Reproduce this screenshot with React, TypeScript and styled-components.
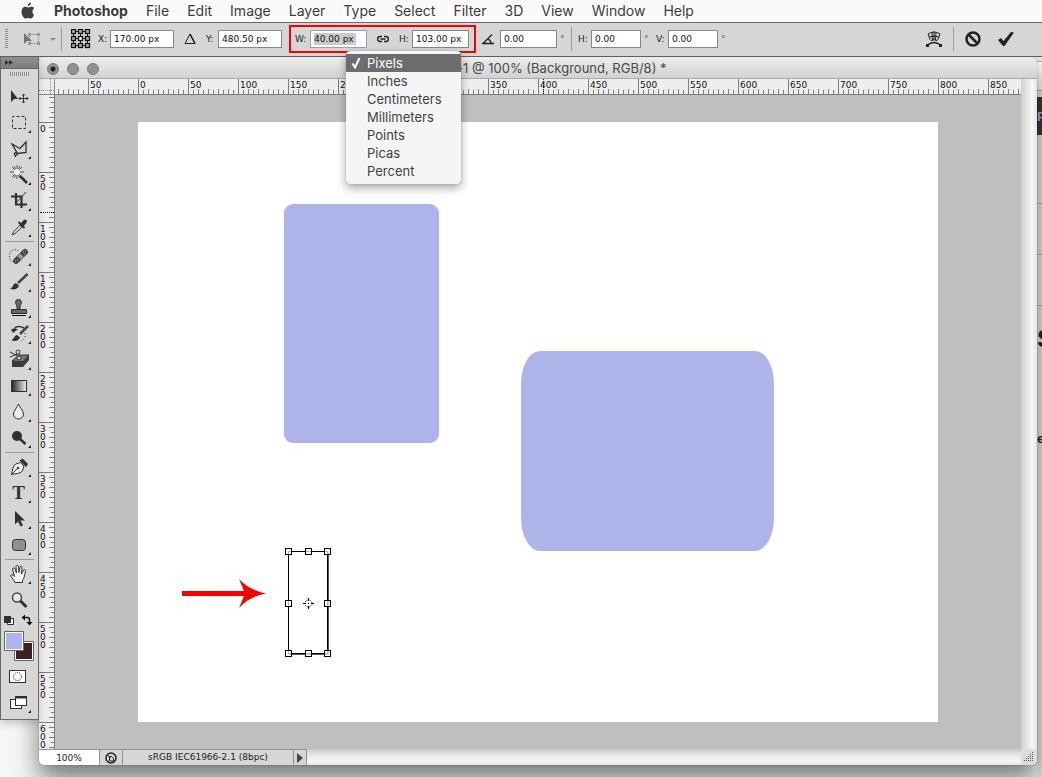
import React from "react";
import styled, { createGlobalStyle, css } from "styled-components";

const Global = createGlobalStyle`
  * { box-sizing: border-box; }
  body { margin: 0; background: #f6f6f6; font-family: Inter, "Liberation Sans", sans-serif; color: #222; }
  button { appearance: none; border: 0; padding: 0; margin: 0; background: none; font: inherit; color: inherit; display: block; }
  svg { display: block; flex: none; }
  ul { list-style: none; margin: 0; padding: 0; }
`;

const PERIWINKLE = "#aeb4e9";
const smallText = `"DejaVu Sans", "Liberation Sans", sans-serif`;

const Screen = styled.div`
  min-height: 100vh;
  display: flex;
  flex-direction: column;
  overflow: hidden;
`;

/* ---------- menu bar ---------- */

const MenuBar = styled.nav`
  height: 22px;
  display: flex;
  align-items: center;
  gap: 18px;
  padding-left: 20px;
  background: #fafafa;
  color: #3c3c3c;
  font-size: 14px;
  line-height: 22px;
`;

const MenuTitle = styled.button<{ $strong?: boolean }>`
  font-weight: ${(p) => (p.$strong ? 700 : 400)};
  white-space: nowrap;
`;

/* ---------- options bar ---------- */

const OptionsBar = styled.header`
  position: relative;
  z-index: 3;
  height: 35px;
  display: flex;
  align-items: center;
  padding: 0 28px 1px 5px;
  background: #d6d6d6;
  border-top: 1px solid #6a6a6a;
  border-bottom: 1px solid #5e5e5e;
  font-family: ${smallText};
  font-size: 9px;
`;

const Slot = styled.div<{ $gap?: number }>`
  margin-left: ${(p) => p.$gap ?? 0}px;
  display: flex;
  align-items: center;
  flex: none;
`;

const Grip = styled.span<{ $row?: boolean }>`
  flex: none;
  width: ${(p) => (p.$row ? 20 : 3)}px;
  height: ${(p) => (p.$row ? 4 : 20)}px;
  background: repeating-linear-gradient(
    ${(p) => (p.$row ? "to right" : "to bottom")},
    #8b8b8b 0 1px,
    #dedede 1px 2px
  );
`;

const Rule = styled.span<{ $gap: number }>`
  flex: none;
  width: 1px;
  height: 24px;
  margin-left: ${(p) => p.$gap}px;
  background: #9c9c9c;
`;

const Spring = styled.span`
  flex: 1;
`;

const Field = styled.label<{ $gap: number }>`
  margin-left: ${(p) => p.$gap}px;
  display: flex;
  align-items: center;
  flex: none;
  color: #1c1c1c;
`;

const FieldName = styled.span<{ $w: number }>`
  width: ${(p) => p.$w}px;
  white-space: nowrap;
`;

const NumberBox = styled.input<{ $w: number; $active?: boolean }>`
  width: ${(p) => p.$w}px;
  height: 18px;
  padding: 0 0 0 3px;
  border: 1px solid #868686;
  border-radius: 0;
  outline: none;
  background: #fff;
  color: #111;
  font: 9px/14px ${smallText};
  ${(p) =>
    p.$active &&
    css`
      border-color: #86a6cf;
      background: linear-gradient(#cacaca, #cacaca) 3px 2px / 42px 12px no-repeat #fff;
    `}
`;

const Degree = styled.span`
  width: 8px;
  margin-left: 3px;
  color: #4d5a66;
`;

const SizeGroup = styled.div`
  position: relative;
  display: flex;
  align-items: center;
  flex: none;
  width: 187px;
  height: 28px;
  margin-left: 7px;
  padding-left: 4px;
  border: 2px solid #f80000;
`;

const UnitMenu = styled.ul`
  position: absolute;
  z-index: 5;
  top: 24px;
  left: 55px;
  width: 115px;
  padding: 3px 0 4px;
  background: #f5f5f5;
  border-radius: 4px;
  box-shadow: 0 4px 10px rgba(0, 0, 0, 0.35), 0 0 1px rgba(0, 0, 0, 0.5);
  font-family: Inter, "Liberation Sans", sans-serif;
  font-size: 13px;
  color: #3f3f42;
`;

const UnitItem = styled.button<{ $on?: boolean }>`
  width: 100%;
  height: 18px;
  display: flex;
  align-items: center;
  line-height: 18px;
  background: ${(p) => (p.$on ? "#6c6c71" : "transparent")};
  color: ${(p) => (p.$on ? "#fff" : "inherit")};
`;

const UnitMark = styled.span`
  width: 21px;
  padding-left: 5px;
`;

/* ---------- workspace ---------- */

const Workspace = styled.main`
  flex: 1;
  display: flex;
  align-items: stretch;
`;

const Toolbox = styled.aside`
  position: relative;
  z-index: 2;
  flex: none;
  align-self: flex-start;
  width: 39px;
  background: #d6d6d6;
  border: 1px solid #6a6a6a;
  border-top: 0;
  padding-bottom: 3px;
  box-shadow: 0 4px 8px rgba(0, 0, 0, 0.18);
`;

const ToolboxHead = styled.div`
  height: 12px;
  display: flex;
  align-items: center;
  padding-left: 4px;
  background: linear-gradient(#8f8f8f, #7d7d7d);
  border-bottom: 1px solid #666;
`;

const ToolboxGrip = styled.div`
  height: 15px;
  padding: 3px 0 0 9px;
  display: flex;
`;

const ToolButton = styled.button`
  width: 37px;
  height: 26px;
`;

const ToolRule = styled.hr`
  margin: 1px 4px;
  border: 0;
  height: 1px;
  background: #9a9a9a;
`;

const DocColumn = styled.div`
  flex: 1;
  min-width: 0;
  display: flex;
  padding-bottom: 12px;
`;

const DocWindow = styled.section`
  position: relative;
  z-index: 1;
  flex: 1;
  min-width: 0;
  display: flex;
  flex-direction: column;
  border-radius: 5px;
  background: #bfbfbf;
  box-shadow: 0 14px 26px rgba(0, 0, 0, 0.52), 0 0 1px rgba(0, 0, 0, 0.7);
`;

const TitleBar = styled.div`
  height: 22px;
  display: grid;
  grid-template-columns: 1fr auto 1fr;
  align-items: center;
  background: linear-gradient(#ededed, #d2d2d2);
  border-bottom: 1px solid #a9a9a9;
  border-radius: 5px 5px 0 0;
  font-size: 13px;
  color: #4a4a4a;
  white-space: nowrap;
`;

const Lights = styled.div`
  display: flex;
  gap: 8px;
  padding: 2px 0 0 8px;
`;

const Light = styled.button`
  width: 12px;
  height: 12px;
  border-radius: 50%;
  border: 1px solid #77777b;
  background: #909095;
`;

const DirtyLight = styled(Light)`
  background: radial-gradient(circle, #222 0 2px, #909095 3px);
`;

const DocMiddle = styled.div`
  flex: 1;
  display: flex;
  min-height: 0;
`;

const DocBody = styled.div`
  flex: 1;
  min-width: 0;
  display: grid;
  grid-template-columns: 16px minmax(0, 1fr);
  grid-template-rows: 16px minmax(0, 1fr);
`;

const Corner = styled.div`
  background: #eee;
  border-right: 1px solid #8c8c8c;
  border-bottom: 1px solid #8c8c8c;
`;

const RulerTop = styled.div`
  position: relative;
  display: flex;
  overflow: hidden;
  padding-left: 33px;
  border-bottom: 1px solid #7d7d7d;
  background:
    linear-gradient(to right, #7d7d7d 1px, transparent 1px) 3px 100% / 10px 5px repeat-x,
    linear-gradient(to right, #7d7d7d 1px, transparent 1px) 8px 100% / 10px 4px repeat-x,
    #eee;
`;

const TopMark = styled.span`
  flex: none;
  width: 50px;
  height: 15px;
  padding-left: 1px;
  border-left: 1px solid #7d7d7d;
  font: 9px/12px ${smallText};
  color: #111;
`;

const RulerLeft = styled.div`
  position: relative;
  overflow: hidden;
  padding-top: 27px;
  border-right: 1px solid #7d7d7d;
  background:
    linear-gradient(to bottom, #7d7d7d 1px, transparent 1px) 100% 2px / 5px 10px repeat-y,
    linear-gradient(to bottom, #7d7d7d 1px, transparent 1px) 100% 7px / 3px 10px repeat-y,
    #eee;
  height: 0;
  min-height: 100%;
`;

const LeftMark = styled.span`
  display: flex;
  flex-direction: column;
  height: 50px;
  padding: 2px 0 0 1px;
  border-top: 1px solid #7d7d7d;
  font: 9px/8px ${smallText};
  color: #111;
`;

const CursorTop = styled.i`
  position: absolute;
  left: 488px;
  top: 0;
  height: 15px;
  border-left: 1px dotted #111;
`;

const CursorLeft = styled.i`
  position: absolute;
  top: 117px;
  left: 1px;
  width: 14px;
  border-top: 1px dotted #111;
`;

const Pasteboard = styled.div`
  padding: 27px 0 27px 83px;
  overflow: hidden;
  background: #bfbfbf;
`;

const ScrollY = styled.div`
  flex: none;
  width: 16px;
  background: linear-gradient(to right, #cfcfcf, #e2e2e2 30%, #f6f6f6 70%, #e4e4e4);
`;

const StatusBar = styled.footer`
  height: 16px;
  display: flex;
  border-radius: 0 0 5px 5px;
  overflow: hidden;
  font: 9px/15px ${smallText};
`;

const ZoomBox = styled.input`
  flex: none;
  width: 60px;
  padding: 0;
  border: 0;
  border-top: 1px solid #929292;
  border-radius: 0;
  outline: none;
  text-align: center;
  background: #fff;
  color: #222;
  font: 9px/14px ${smallText};
`;

const StatusCell = styled.button<{ $w: number }>`
  flex: none;
  width: ${(p) => p.$w}px;
  display: flex;
  align-items: center;
  justify-content: center;
  background: #d6d6d6;
  border-left: 1px solid #929292;
  border-top: 1px solid #929292;
  white-space: nowrap;
`;

const ScrollX = styled.div`
  flex: 1;
  border-left: 1px solid #929292;
  background: linear-gradient(#c8c8c8, #e2e2e2 30%, #f6f6f6 75%, #e4e4e4);
`;

const Resize = styled.div`
  flex: none;
  width: 16px;
  display: flex;
  align-items: center;
  justify-content: center;
  background: #dcdcdc;
`;

/* ---------- browser page showing past the window's edge ---------- */

const Behind = styled.aside`
  flex: none;
  width: 5px;
  overflow: hidden;
  display: flex;
  flex-direction: column;
  background: #e9e9e9;
  color: #222;
`;

const BehindBlock = styled.div<{ $h: number; $bg?: string; $line?: boolean }>`
  flex: none;
  height: ${(p) => p.$h}px;
  background: ${(p) => p.$bg ?? "transparent"};
  border-bottom: ${(p) => (p.$line ? "1px solid #b4b4b4" : "0")};
  overflow: hidden;
  white-space: nowrap;
  display: flex;
  align-items: center;
`;

const BehindText = styled.span<{ $size: number; $color?: string }>`
  font: 700 ${(p) => p.$size}px/1 "Liberation Sans", sans-serif;
  color: ${(p) => p.$color ?? "#222"};
`;

/* ---------- icons ---------- */

const AppleLogo = () => (
  <svg width="16" height="20" viewBox="0 0 16 20" fill="#3f3f3f">
    <path d="M10.9 1.5c.1 1.9-1.4 3.6-3.1 3.6-.2-1.8 1.4-3.5 3.1-3.6z" />
    <path d="M14 13.9c-.7 1.7-1.9 3.6-3.3 3.6-1 0-1.300-.6-2.500-.6s-1.600.6-2.500.6C3.700 17.500 1.500 13.900 1.500 10.700c0-3 1.900-4.900 3.900-4.900 1.200 0 2 .7 2.900.7.9 0 1.700-.8 3.200-.8 1 0 2 .5 2.700 1.500-2.500 1.500-2 5.400-.2 6.700z" />
  </svg>
);

const Flyout = () => <path d="M31 20v3h-3z" fill="#222" />;

const K = "#303030";

const toolDrawings: Record<string, React.ReactNode> = {
  Move: (
    <>
      <path d="M11 6v12l3-3h4z" fill={K} />
      <path d="M23.500 10v9M19 14.500h9M22 11.500l1.500-1.500 1.500 1.500M22 17.500l1.500 1.500 1.500-1.500M20.500 13l-1.500 1.500 1.500 1.500M26.500 13l1.500 1.500-1.500 1.500" fill="none" stroke={K} />
    </>
  ),
  Marquee: <rect x="12.500" y="6.500" width="13" height="12" fill="none" stroke={K} strokeDasharray="3 2" strokeDashoffset="1" />,
  Lasso: <path d="M12 8l8 4.500L26 6v10.500l-8.500 1L12 8zM17.500 17.500c-2-1.500-3.500-.5-3 1s2.500 1 3-1zM16 19l-1 2" fill="none" stroke={K} strokeWidth="1.300" />,
  Wand: (
    <>
      <path d="M17 3v14M10 10h14M12 5l10 10M22 5L12 15M14 4l6 12M20 4l-6 12" stroke="#555" strokeWidth="1" strokeDasharray="4 1" />
      <circle cx="17" cy="10" r="3" fill="#ededed" />
      <path d="M20 14l7 7" stroke={K} strokeWidth="2.500" />
    </>
  ),
  Crop: (
    <>
      <path d="M16 5v11.500H27M11 8.500h10.500V20" fill="none" stroke={K} strokeWidth="2.200" />
      <path d="M26 4L16 15" stroke={K} strokeWidth="1" />
    </>
  ),
  Eyedropper: (
    <>
      <path d="M21 10l-7.500 8-1.500 3 3-1.500 8-7.500z" fill="#e8e8e8" stroke={K} />
      <path d="M18.500 8l6 6" stroke={K} strokeWidth="2" />
      <path d="M22 11l3-3.500" stroke={K} strokeWidth="4" strokeLinecap="round" />
    </>
  ),
  Healing: (
    <>
      <path d="M18 8c-3-3-8-1-8.500 4-.3 4 1 6 3 7" fill="none" stroke={K} strokeDasharray="1 1.500" />
      <path d="M16 18L25 9" stroke="#444" strokeWidth="6" strokeLinecap="round" />
      <path d="M19 15l3-3" stroke="#8d8d8d" strokeWidth="6" />
      <path d="M15 18h1M17 17h1M23 9h1M25 8h1M24 11h1M19 14h1M21 14h1M20 12h1" stroke="#c0c0c0" />
    </>
  ),
  Brush: (
    <>
      <path d="M27.500 5L18 14" stroke="#444" strokeWidth="2.500" />
      <path d="M10 19.500c3 0 2.500-5 6-5.500l3 2.500C18 20 14 21.500 10 19.500z" fill={K} />
    </>
  ),
  Stamp: (
    <>
      <path d="M15.500 7.500a3 3 0 0 1 6 0c0 1.500-1.500 2-1.500 6h-3c0-4-1.500-4.500-1.500-6z" fill="#666" stroke={K} />
      <path d="M11.500 14.500h15v4h-15z" fill="#666" stroke={K} />
      <path d="M12 20.500h14" stroke="#111" />
    </>
  ),
  HistoryBrush: (
    <>
      <path d="M28 5l-8 8" stroke="#444" strokeWidth="2.500" />
      <path d="M11 19c3 0 3-4.500 6-5l3 2.500c-1.500 3.500-5 4.500-9 2.500z" fill={K} />
      <path d="M24 7c-4-2-8-2-10 1" fill="none" stroke={K} strokeWidth="1.500" />
      <path d="M11 8l7 0-5 4z" fill={K} />
      <path d="M25 12c1 4-1 7-4 8" fill="none" stroke={K} strokeDasharray="1 2" />
    </>
  ),
  Eraser: (
    <>
      <path d="M12 14l7-6h10l-6 7z" fill="#777" stroke={K} />
      <path d="M12 14h11v6H12zM23 15l6-7v5l-6 7z" fill="#3a3a3a" />
      <path d="M10 5l10 5M10 10l10-4" stroke={K} />
      <circle cx="18" cy="5" r="2" fill="#ddd" stroke={K} />
      <circle cx="19" cy="11" r="2" fill="#ddd" stroke={K} />
    </>
  ),
  Gradient: (
    <>
      <defs>
        <linearGradient id="toolRamp">
          <stop offset="0" stopColor="#222" />
          <stop offset="1" stopColor="#f0f0f0" />
        </linearGradient>
      </defs>
      <rect x="11.500" y="7.500" width="15" height="11" fill="url(#toolRamp)" stroke={K} />
    </>
  ),
  Blur: <path d="M18.500 5c-1 3.500-5 6.500-5 10a5 5 0 0 0 10 0c0-3.500-4-6.500-5-10z" fill="#ececec" stroke={K} />,
  Dodge: (
    <>
      <circle cx="17" cy="11" r="5" fill={K} />
      <path d="M20 14l5.500 5" stroke={K} strokeWidth="2.500" />
    </>
  ),
  Pen: (
    <>
      <path d="M11.500 20.500c1-4 1-8 4-10.500l5-1.500 3.500 3.500-1.500 5c-3 3-7 2.500-11 3.500z" fill="#ededed" stroke={K} />
      <path d="M12 20l5.500-5.500" stroke={K} />
      <circle cx="18" cy="14" r="1.200" fill={K} />
      <path d="M19.500 6.500l6.500 6.500 2-3-5.500-5.500z" fill={K} />
    </>
  ),
  Type: (
    <text x="18.500" y="19" textAnchor="middle" fontFamily="Liberation Serif, serif" fontSize="19" fontWeight="700" fill={K}>
      T
    </text>
  ),
  PathSelect: <path d="M15 5v13.500l3-3 2.500 5 2.500-1-2.500-5H25z" fill={K} />,
  RoundedRect: <rect x="12.500" y="7.500" width="13" height="11" rx="3" fill="#8f8f8f" stroke={K} />,
  Hand: (
    <path
      d="M15 21.500c-1-2.500-3.500-5-4.500-7 .5-1.500 2-1 4 1L12.500 8c.5-1.500 2-1.500 2.500 0l1.500 4-.5-6.500c.5-1.500 2-1.500 2.500 0l.5 6 1-5.500c.7-1.300 2-1 2 .5l-.5 6.500 2-4c1-1 2.200-.3 2 1-.7 3-1 7-3 9.500v2z"
      fill="#f4f4f4"
      stroke={K}
    />
  ),
  Zoom: (
    <>
      <path d="M20.500 14l6 6" stroke={K} strokeWidth="3" />
      <circle cx="17" cy="10.500" r="4.500" fill="#e9e9e9" stroke="#444" strokeWidth="1.500" />
    </>
  ),
};

const toolGroups: string[][] = [
  ["Move", "Marquee", "Lasso", "Wand", "Crop", "Eyedropper"],
  ["Healing", "Brush", "Stamp", "HistoryBrush", "Eraser", "Gradient", "Blur", "Dodge"],
  ["Pen", "Type", "PathSelect", "RoundedRect"],
  ["Hand", "Zoom"],
];

const noFlyout = ["Move", "Zoom"];

const Tool = ({ name }: { name: string }) => (
  <ToolButton aria-label={name}>
    <svg width="37" height="26" viewBox="1 0 37 26">
      {toolDrawings[name]}
      {!noFlyout.includes(name) && <Flyout />}
    </svg>
  </ToolButton>
);

const Swatches = () => (
  <svg width="37" height="51" viewBox="1 613 37 51">
    <path d="M7.500 618.500h6v6h-6z" fill="#fff" stroke={K} />
    <path d="M4 616h7v7H4z" fill={K} />
    <path d="M24 617.500h3.500q2 0 2 2v4" fill="none" stroke="#111" strokeWidth="1.500" />
    <path d="M25 614.500v6l-3.500-3zM26.500 622h6l-3 3.500z" fill="#111" />
    <path d="M14.500 641.500h19v19h-19z" fill="#fff" stroke="#666" />
    <path d="M16 643h16v16H16z" fill="#3d2022" />
    <path d="M4.500 631.500h19v19h-19z" fill="#fff" stroke="#666" />
    <path d="M6 633h16v16H6z" fill={PERIWINKLE} />
  </svg>
);

const handleXs = [150.5, 170.5, 189.5];
const handleYs = [429.5, 481.5, 531.5];

const Artwork = () => (
  <svg width="800" height="600" viewBox="0 0 800 600" role="img" aria-label="Canvas">
    <rect width="800" height="600" fill="#fff" />
    <rect x="146" y="82" width="155" height="239" rx="9" fill={PERIWINKLE} />
    <rect x="383" y="229" width="253" height="200" rx="19" ry="33" fill={PERIWINKLE} />
    <path d="M44 469h62l-5-12q10 11 27 14.500q-17 3-27 14.500l5-12H44z" fill="#f80000" />
    <rect x="150.500" y="429.500" width="39" height="102" fill="none" stroke="#000" />
    <path d="M190.500 430v102.500H151" fill="none" stroke="#555" />
    {handleXs.map((x) =>
      handleYs.map((y) =>
        x === 170.5 && y === 481.5 ? null : (
          <rect key={`${x}-${y}`} x={x - 3} y={y - 3} width="6" height="6" fill="#fff" fillOpacity="0.7" stroke="#000" />
        ),
      ),
    )}
    <circle cx="170.500" cy="481.500" r="3.500" fill="none" stroke="#111" strokeDasharray="1 1" />
    <path d="M165 481.500h3M173 481.500h3M170.500 476v3M170.500 484v3M170 481.500h1" stroke="#000" />
  </svg>
);

const Drawing = ({ w, h, children }: { w: number; h: number; children: React.ReactNode }) => (
  <svg width={w} height={h} viewBox={`0 0 ${w} ${h}`} fill="none" stroke="#222">
    {children}
  </svg>
);

const menus = ["File", "Edit", "Image", "Layer", "Type", "Select", "Filter", "3D", "View", "Window", "Help"];
const units = ["Pixels", "Inches", "Centimeters", "Millimeters", "Points", "Picas", "Percent"];
const topMarks = [50, ...Array.from({ length: 18 }, (_, i) => i * 50)];
const leftMarks = Array.from({ length: 13 }, (_, i) => String(i * 50));

export default function App() {
  return (
    <Screen>
      <Global />
      <MenuBar>
        <AppleLogo />
        <MenuTitle $strong>Photoshop</MenuTitle>
        {menus.map((m) => (
          <MenuTitle key={m}>{m}</MenuTitle>
        ))}
      </MenuBar>

      <OptionsBar>
        <Grip />
        <Slot $gap={15}>
          <button aria-label="Transform tool presets">
            <Drawing w={33} h={18}>
              <rect x="6.500" y="4.500" width="9" height="9" stroke="#8a8a8a" strokeDasharray="2 1" />
              <path d="M5 3h3v3H5zM14 3h3v3h-3zM14 12h3v3h-3zM5 12h3v3H5z" fill="#999" stroke="none" />
              <path d="M1 3v11l3-3h5z" fill="#777" stroke="none" />
              <path d="M27 8h6l-3 3z" fill="#888" stroke="none" />
            </Drawing>
          </button>
        </Slot>
        <Rule $gap={5} />
        <Slot $gap={9}>
          <button aria-label="Reference point">
            <Drawing w={20} h={20}>
              <path d="M2.500 2.500h14v14h-14zM9.500 2v15M2 9.500h15" strokeWidth="1" />
              {[0.5, 7.5, 14.5].map((x) =>
                [0.5, 7.5, 14.5].map((y) => (
                  <rect
                    key={`${x}${y}`}
                    x={x}
                    y={y}
                    width="4"
                    height="4"
                    fill={x === 7.5 && y === 7.5 ? "#fff" : "#b0b0b0"}
                    stroke="#111"
                    strokeWidth="1.300"
                  />
                )),
              )}
            </Drawing>
          </button>
        </Slot>
        <Field $gap={7}>
          <FieldName $w={12}>X:</FieldName>
          <NumberBox $w={64} defaultValue="170.00 px" />
        </Field>
        <Slot $gap={10}>
          <button aria-label="Relative positioning">
            <Drawing w={12} h={12}>
              <path d="M1 10.500L6 1l5 9.500z" />
              <path d="M6 1l5 9.500" strokeWidth="1.500" />
            </Drawing>
          </button>
        </Slot>
        <Field $gap={10}>
          <FieldName $w={12}>Y:</FieldName>
          <NumberBox $w={64} defaultValue="480.50 px" />
        </Field>
        <SizeGroup>
          <Field $gap={0}>
            <FieldName $w={15}>W:</FieldName>
            <NumberBox $w={57} $active defaultValue="40.00 px" />
          </Field>
          <Slot $gap={10}>
            <button aria-label="Maintain aspect ratio">
              <Drawing w={12} h={8}>
                <path d="M5 1.500H3a2 2 0 0 0 0 5h2M7 1.500h2a2 2 0 0 1 0 5H7M3.500 4h5" strokeWidth="1.500" />
              </Drawing>
            </button>
          </Slot>
          <Field $gap={10}>
            <FieldName $w={13}>H:</FieldName>
            <NumberBox $w={57} defaultValue="103.00 px" />
          </Field>
          <UnitMenu role="menu">
            {units.map((u, i) => (
              <li key={u} role="none">
                <UnitItem role="menuitemradio" aria-checked={i === 0} $on={i === 0}>
                  <UnitMark>
                    {i === 0 && (
                      <Drawing w={11} h={12}>
                        <path d="M1.500 6.500l2.500 4L8.500 1" stroke="#fff" strokeWidth="2" />
                      </Drawing>
                    )}
                  </UnitMark>
                  {u}
                </UnitItem>
              </li>
            ))}
          </UnitMenu>
        </SizeGroup>
        <Field $gap={6} aria-label="Rotation">
          <Drawing w={18} h={12}>
            <path d="M0 10.500h12M1 10.500L10 1.500M6 6c2 1 3 2.500 3 4.500" strokeWidth="1.300" />
          </Drawing>
          <NumberBox $w={57} defaultValue="0.00" />
        </Field>
        <Degree>°</Degree>
        <Rule $gap={3} />
        <Field $gap={6}>
          <FieldName $w={13}>H:</FieldName>
          <NumberBox $w={50} defaultValue="0.00" />
        </Field>
        <Degree>°</Degree>
        <Field $gap={4}>
          <FieldName $w={12}>V:</FieldName>
          <NumberBox $w={50} defaultValue="0.00" />
        </Field>
        <Degree>°</Degree>
        <Spring />
        <Slot>
          <button aria-label="Warp mode">
            <Drawing w={16} h={18}>
              <path d="M2 4q6-4 12 0l-1.500 4q-.5 2-1.500 2.500-3-1.500-6 0Q4 10 3.500 8zM3 7q5-2 10 0M6 2.500L6.500 10M10 2.500L9.500 10M8 1.500v8" />
              <path d="M1 15.500q7-6 14 0" strokeWidth="1.500" />
              <path d="M0 14h3v3H0zM13 14h3v3h-3z" fill="#222" stroke="none" />
            </Drawing>
          </button>
        </Slot>
        <Rule $gap={11} />
        <Slot $gap={11}>
          <button aria-label="Cancel transform">
            <Drawing w={16} h={16}>
              <circle cx="8" cy="8" r="6.500" strokeWidth="2.500" />
              <path d="M3.500 3.500l9 9" strokeWidth="2.500" />
            </Drawing>
          </button>
        </Slot>
        <Slot $gap={17}>
          <button aria-label="Commit transform">
            <Drawing w={16} h={16}>
              <path d="M0 9l3-2 2.500 3L13 1l3 .5L6.500 15H5z" fill="#222" stroke="none" />
            </Drawing>
          </button>
        </Slot>
      </OptionsBar>

      <Workspace>
        <Toolbox>
          <ToolboxHead>
            <Drawing w={8} h={5}>
              <path d="M0 0l4 2.500L0 5zM4 0l4 2.500L4 5z" fill="#333" stroke="none" />
            </Drawing>
          </ToolboxHead>
          <ToolboxGrip>
            <Grip $row />
          </ToolboxGrip>
          {toolGroups.map((group, i) => (
            <React.Fragment key={group[0]}>
              {i > 0 && <ToolRule />}
              {group.map((t) => (
                <Tool key={t} name={t} />
              ))}
            </React.Fragment>
          ))}
          <Swatches />
          <ToolButton aria-label="Quick mask">
            <svg width="37" height="26" viewBox="1 0 37 26">
              <rect x="9.500" y="6.500" width="16" height="12" fill="#fff" stroke={K} />
              <circle cx="17.500" cy="12.500" r="4" fill="#fff" stroke="#111" strokeDasharray="1 1" />
            </svg>
          </ToolButton>
          <ToolButton aria-label="Screen mode">
            <svg width="37" height="26" viewBox="1 0 37 26" fill="#fff" stroke={K}>
              <rect x="10.500" y="9.500" width="11" height="9" />
              <rect x="15.500" y="6.500" width="11" height="9" />
              <path d="M15 7.500h12" strokeWidth="2" />
              <path d="M31 20v3h-3z" fill="#222" stroke="none" />
            </svg>
          </ToolButton>
        </Toolbox>

        <DocColumn>
          <DocWindow>
            <TitleBar>
              <Lights>
                <DirtyLight aria-label="Close" />
                <Light aria-label="Minimize" />
                <Light aria-label="Full screen" />
              </Lights>
              <span>Untitled-1 @ 100% (Background, RGB/8) *</span>
            </TitleBar>
            <DocMiddle>
              <DocBody>
                <Corner>
                  <svg width="15" height="15" viewBox="0 0 15 15">
                    <path d="M11.500 0v15M0 11.500h15" stroke="#888" strokeDasharray="1 1" />
                  </svg>
                </Corner>
                <RulerTop>
                  {topMarks.map((m, i) => (
                    <TopMark key={i}>{m}</TopMark>
                  ))}
                  <CursorTop />
                </RulerTop>
                <RulerLeft>
                  {leftMarks.map((m) => (
                    <LeftMark key={m}>
                      {m.split("").map((d, i) => (
                        <span key={i}>{d}</span>
                      ))}
                    </LeftMark>
                  ))}
                  <CursorLeft />
                </RulerLeft>
                <Pasteboard>
                  <Artwork />
                </Pasteboard>
              </DocBody>
              <ScrollY />
            </DocMiddle>
            <StatusBar>
              <ZoomBox aria-label="Zoom level" defaultValue="100%" />
              <StatusCell $w={23} aria-label="Preview">
                <Drawing w={12} h={12}>
                  <circle cx="6" cy="6" r="5" strokeWidth="1.500" />
                  <path d="M4.500 9V4.500h2L8.500 6.500V9zM2.500 3l3 3" />
                </Drawing>
              </StatusCell>
              <StatusCell $w={171}>sRGB IEC61966-2.1 (8bpc)</StatusCell>
              <StatusCell $w={13} aria-label="Status options">
                <Drawing w={6} h={10}>
                  <path d="M0 0l6 5-6 5z" fill="#444" stroke="none" />
                </Drawing>
              </StatusCell>
              <ScrollX />
              <Resize>
                <Drawing w={10} h={10}>
                  <path
                    d="M8 .5h1M6 2.500h3M4 4.500h5M2 6.500h7M0 8.500h9"
                    stroke="#555"
                    strokeDasharray="1 1"
                  />
                </Drawing>
              </Resize>
            </StatusBar>
          </DocWindow>
        </DocColumn>

        <Behind>
          <BehindBlock $h={5} $line />
          <BehindBlock $h={29} $bg="#fafafa" $line />
          <BehindBlock $h={6} />
          <BehindBlock $h={38} $bg="#3a3a3a">
            <BehindText $size={13} $color="#9db8d8">P</BehindText>
          </BehindBlock>
          <BehindBlock $h={69} $line />
          <BehindBlock $h={51} $line />
          <BehindBlock $h={51} $line />
          <BehindBlock $h={66}>
            <BehindText $size={24}>S</BehindText>
          </BehindBlock>
          <BehindBlock $h={132}>
            <BehindText $size={13}>er</BehindText>
          </BehindBlock>
        </Behind>
      </Workspace>
    </Screen>
  );
}
